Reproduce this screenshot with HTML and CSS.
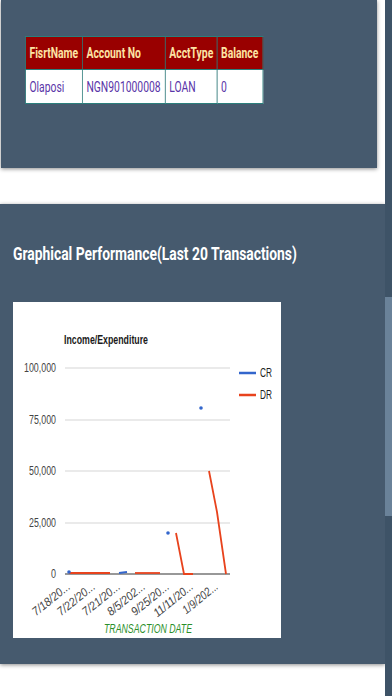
FILE: index.html
```html
<!DOCTYPE html>
<html lang="en">
<head>
  <meta charset="UTF-8">
  <title>Account Summary</title>
  <link rel="stylesheet" href="styles.css">
</head>
<body>
  <div class="page">
    <div class="content">
      <div class="card card-top">
        <div class="narrow narrow-table">
          <table class="acct-table">
            <tr>
              <th class="col-name">FisrtName</th>
              <th class="col-acct">Account No</th>
              <th class="col-type">AcctType</th>
              <th class="col-bal">Balance</th>
            </tr>
            <tr>
              <td>Olaposi</td>
              <td>NGN901000008</td>
              <td>LOAN</td>
              <td>0</td>
            </tr>
          </table>
        </div>
      </div>
      <div class="card card-chart">
        <h2 class="section-title narrow">Graphical Performance(Last 20 Transactions)</h2>
        <div class="chart-box">
          <svg class="chart" width="268" height="336" viewBox="0 0 268 336">
            <text x="51" y="42" class="c-title" textLength="84" lengthAdjust="spacingAndGlyphs">Income/Expenditure</text>

            <g class="grid">
              <line x1="52" y1="66" x2="217" y2="66"/>
              <line x1="52" y1="118" x2="217" y2="118"/>
              <line x1="52" y1="169" x2="217" y2="169"/>
              <line x1="52" y1="221" x2="217" y2="221"/>
            </g>
            <line x1="52" y1="272" x2="217" y2="272" class="axis"/>

            <g class="y-labels">
              <text x="43" y="70" textLength="32" lengthAdjust="spacingAndGlyphs">100,000</text>
              <text x="43" y="122" textLength="27" lengthAdjust="spacingAndGlyphs">75,000</text>
              <text x="43" y="173" textLength="27" lengthAdjust="spacingAndGlyphs">50,000</text>
              <text x="43" y="225" textLength="27" lengthAdjust="spacingAndGlyphs">25,000</text>
              <text x="43" y="276" textLength="5" lengthAdjust="spacingAndGlyphs">0</text>
            </g>

            <!-- DR series -->
            <g class="dr">
              <polyline points="56,271 97,271"/>
              <polyline points="122,271 147,271"/>
              <polyline points="163,231 171,272 180,272"/>
              <polyline points="196,169 204,210 213,272"/>
            </g>
            <!-- CR series -->
            <g class="cr">
              <polyline points="106,271 114,270"/>
              <circle cx="56" cy="270" r="1.8"/>
              <circle cx="155" cy="231" r="1.8"/>
              <circle cx="188" cy="106" r="1.8"/>
            </g>

            <g class="legend">
              <line x1="226" y1="71" x2="243" y2="71" class="lg-cr"/>
              <text x="247" y="75" textLength="12" lengthAdjust="spacingAndGlyphs">CR</text>
              <line x1="226" y1="93" x2="243" y2="93" class="lg-dr"/>
              <text x="247" y="97" textLength="12" lengthAdjust="spacingAndGlyphs">DR</text>
            </g>

            <g class="x-labels">
              <text transform="translate(58,286) rotate(-39)" textLength="45" lengthAdjust="spacingAndGlyphs">7/18/20...</text>
              <text transform="translate(83,286) rotate(-39)" textLength="45" lengthAdjust="spacingAndGlyphs">7/22/20...</text>
              <text transform="translate(108,286) rotate(-39)" textLength="45" lengthAdjust="spacingAndGlyphs">7/21/20...</text>
              <text transform="translate(133,286) rotate(-39)" textLength="45" lengthAdjust="spacingAndGlyphs">8/5/202...</text>
              <text transform="translate(157,286) rotate(-39)" textLength="45" lengthAdjust="spacingAndGlyphs">9/25/20...</text>
              <text transform="translate(181,286) rotate(-39)" textLength="47" lengthAdjust="spacingAndGlyphs">11/11/20...</text>
              <text transform="translate(206,286) rotate(-39)" textLength="42" lengthAdjust="spacingAndGlyphs">1/9/202...</text>
            </g>

            <text x="135" y="331" class="x-title" textLength="88" lengthAdjust="spacingAndGlyphs">TRANSACTION DATE</text>
          </svg>
        </div>
      </div>
    </div>
    <div class="scrollbar">
      <div class="thumb"></div>
    </div>
  </div>
</body>
</html>
```

FILE: styles.css
```css
* {
  box-sizing: border-box;
}

body {
  margin: 0;
  background: #fff;
  font-family: Roboto, "Liberation Sans", sans-serif;
}

.page {
  display: flex;
  height: 696px;
  overflow: hidden;
}

.content {
  flex: 1;
  display: flex;
  flex-direction: column;
}

/* the screenshot text is horizontally condensed */
.narrow {
  transform: scaleX(0.77);
  transform-origin: left center;
  white-space: nowrap;
}

.narrow-table {
  transform: scaleX(0.74);
}

.card {
  background-color: #465a6e;
}

.card-top {
  width: 376px;
  height: 168px;
  margin-left: 1px;
  margin-bottom: 36px;
  padding: 36px 24px;
  box-shadow: 0 1px 4px rgba(0, 0, 0, 0.45);
}

.acct-table {
  border-collapse: collapse;
  table-layout: fixed;
  font-size: 14px;
}

.acct-table th,
.acct-table td {
  border: 1px solid #2b7f7c;
  padding: 0 0 0 5px;
  text-align: left;
}

.acct-table th {
  height: 33px;
  background-color: #990000;
  color: #fde4a4;
  font-weight: bold;
}

.acct-table td {
  height: 34px;
  background-color: #fff;
  color: #5a35a8;
}

.col-name { width: 77px; }
.col-acct { width: 112px; }
.col-type { width: 70px; }
.col-bal { width: 62px; }

.card-chart {
  height: 460px;
  padding: 38px 0 0 13px;
  box-shadow: 0 1px 4px rgba(0, 0, 0, 0.45);
}

.section-title {
  margin: 0 0 36px;
  color: #fff;
  font-size: 18px;
  line-height: 24px;
  font-weight: bold;
}

.chart-box {
  width: 268px;
  height: 336px;
  background: #fff;
}

.chart {
  display: block;
  font-family: "Liberation Sans", Arial, sans-serif;
}

.c-title {
  font-size: 13px;
  font-weight: bold;
  fill: #1a1a1a;
}

.grid line {
  stroke: #d6d6d6;
  stroke-width: 1.2;
}

.axis {
  stroke: #333;
  stroke-width: 1.2;
}

.y-labels text {
  font-size: 12px;
  fill: #444;
  text-anchor: end;
}

.dr polyline {
  fill: none;
  stroke: #e8431d;
  stroke-width: 1.8;
}

.cr polyline {
  fill: none;
  stroke: #3366cc;
  stroke-width: 2;
}

.cr circle {
  fill: #3366cc;
}

.legend text {
  font-size: 13px;
  fill: #222;
}

.lg-cr {
  stroke: #3366cc;
  stroke-width: 2.5;
}

.lg-dr {
  stroke: #e8431d;
  stroke-width: 2.5;
}

.x-labels text {
  font-size: 12px;
  fill: #444;
  font-style: italic;
  text-anchor: end;
}

.x-title {
  font-size: 13px;
  fill: #2a8f2a;
  font-style: italic;
  text-anchor: middle;
}

.scrollbar {
  width: 7px;
  background-color: #3e5367;
  padding-top: 297px;
}

.thumb {
  height: 219px;
  background-color: #6a8299;
}
```
